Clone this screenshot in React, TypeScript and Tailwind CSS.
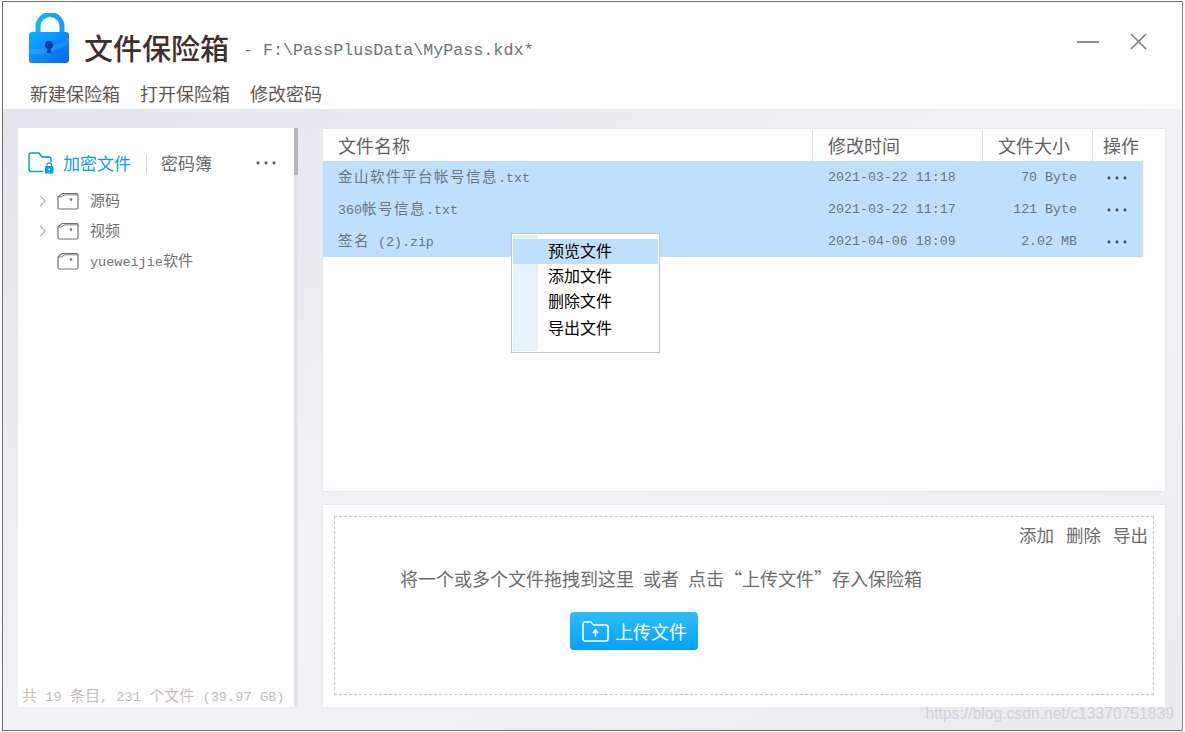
import { ChevronRight } from 'lucide-react';

const cjk = { fontFamily: '"Noto Sans CJK SC", "Liberation Sans", sans-serif' };
const mono = { fontFamily: '"Liberation Mono", "Noto Sans CJK SC", monospace' };

const files = [
  { name: '金山软件平台帐号信息.txt', time: '2021-03-22 11:18', size: '70 Byte' },
  { name: '360帐号信息.txt', time: '2021-03-22 11:17', size: '121 Byte' },
  { name: '签名 (2).zip', time: '2021-04-06 18:09', size: '2.02 MB' },
];

const folders = [
  { name: '源码', arrow: true },
  { name: '视频', arrow: true },
  { name: 'yueweijie软件', arrow: false },
];

const menuItems = [
  { label: '预览文件', rowClass: 'h-[25px] bg-[#bfe0fd]' },
  { label: '添加文件', rowClass: 'h-[25px]' },
  { label: '删除文件', rowClass: 'h-[25px]' },
  { label: '导出文件', rowClass: 'h-[27px] pt-[2px]' },
];

// chinese runs are bigger than the mono latin in the original font
function Mixed({ text, cjkClass }: { text: string; cjkClass: string }) {
  return (
    <>
      {text.split(/([\u4e00-\u9fff]+)/).map((part, i) =>
        i % 2 === 1 ? (
          <span key={i} className={cjkClass} style={cjk}>
            {part}
          </span>
        ) : (
          <span key={i}>{part}</span>
        ),
      )}
    </>
  );
}

function LockLogo() {
  return (
    <svg width="42" height="52" viewBox="0 0 42 52">
      <defs>
        <linearGradient id="lockBody" x1="0" y1="0" x2="1" y2="1">
          <stop offset="0" stopColor="#0cb4ff" />
          <stop offset="1" stopColor="#0a62fb" />
        </linearGradient>
        <linearGradient id="lockRing" x1="0" y1="0" x2="1" y2="0">
          <stop offset="0" stopColor="#12b5fd" />
          <stop offset="1" stopColor="#1c9cf8" />
        </linearGradient>
      </defs>
      <path d="M9 22V13.5a12 12 0 0 1 24 0V22" fill="none" stroke="url(#lockRing)" strokeWidth="5" />
      <rect x="0" y="19" width="40" height="31" rx="3" fill="url(#lockBody)" />
      <path d="M0 36c14 1 30-3 40-11v5c-10 8-26 12-40 11z" fill="#ffffff" opacity="0.08" />
      <circle cx="20" cy="32" r="4" fill="#0a3f98" />
      <path d="M18.4 33h3.2l.4 7h-4z" fill="#0a3f98" />
    </svg>
  );
}

function SafeFolderIcon() {
  return (
    <svg width="26" height="22" viewBox="0 0 26 22" fill="none" stroke="#0a9cf5" strokeWidth="1.5">
      <path d="M15 19.5H3a2 2 0 0 1-2-2V3a2 2 0 0 1 2-2h8l3 4h7a2 2 0 0 1 2 2v3" />
      <path d="M11 1.2l3 3.8h8" strokeWidth="1" />
      <rect x="17" y="14" width="8.5" height="7.5" rx="1" fill="#0a9cf5" stroke="none" />
      <path d="M19 14.5v-1.5a2.2 2.2 0 0 1 4.4 0v1.5" strokeWidth="1.2" />
      <circle cx="21.2" cy="17.5" r="1" fill="#ffffff" stroke="none" />
    </svg>
  );
}

function FolderIcon() {
  return (
    <svg width="22" height="18" viewBox="0 0 22 18" fill="none" stroke="#6f6f6f" strokeWidth="1.2">
      <path d="M1 5V15.5a1.5 1.5 0 0 0 1.5 1.5h17a1.5 1.5 0 0 0 1.5-1.5V3a1.5 1.5 0 0 0-1.5-1.5H5L1 5z" />
      <path d="M1 5h3l4-2.2h13" strokeWidth="0.9" />
      <circle cx="14" cy="7.5" r="1.3" fill="#6f6f6f" stroke="none" />
    </svg>
  );
}

function UploadFolderIcon() {
  return (
    <svg width="27" height="21" viewBox="0 0 27 21" fill="none" stroke="#ffffff" strokeWidth="1.6">
      <path d="M1 3a2 2 0 0 1 2-2h6l2.5 3H24a2 2 0 0 1 2 2v12a2 2 0 0 1-2 2H3a2 2 0 0 1-2-2z" />
      <path d="M13.5 15.5v-5M10.8 12l2.7-2.7 2.7 2.7" strokeWidth="1.7" />
    </svg>
  );
}

function Dots({ color = '#4a4a4a' }: { color?: string }) {
  return (
    <svg width="20" height="4" viewBox="0 0 20 4">
      <circle cx="2" cy="2" r="1.4" fill={color} />
      <circle cx="10" cy="2" r="1.4" fill={color} />
      <circle cx="18" cy="2" r="1.4" fill={color} />
    </svg>
  );
}

export default function App() {
  return (
    <div className="w-[1185px] h-[732px] bg-white overflow-hidden pl-[2px] pt-[1px]" style={cjk}>
      <div className="relative w-[1181px] h-[730px] flex flex-col border-l border-t border-r border-b border-l-[#6e6e6e] border-t-[#6e6e6e] border-r-[#8a8a8a] border-b-[#6e6e6e] bg-white">
        {/* Title bar */}
        <div className="h-[107px] shrink-0 flex flex-col">
          <div className="h-[72px] flex items-start pl-[26px] pr-[35px]">
            <div className="mt-[11px]">
              <LockLogo />
            </div>
            <span className="ml-[13px] mt-[26px] text-[29px] leading-[38px] font-medium text-[#3f2f2d]">文件保险箱</span>
            <span className="ml-[14px] mt-[37px] text-[16.7px] leading-[24px] text-[#6c7478]" style={mono}>
              - F:\PassPlusData\MyPass.kdx*
            </span>
            <div className="ml-auto mt-[31px] flex items-center gap-[31px]">
              <div className="w-[22px] h-[2px] bg-[#8c8c8c]" />
              <svg width="17" height="17" viewBox="0 0 17 17" stroke="#7d7d7d" strokeWidth="1.6">
                <path d="M1 1l15 15M16 1L1 16" />
              </svg>
            </div>
          </div>
          <div className="flex gap-[20px] pl-[27px] mt-[7px] text-[18px] leading-[24px] text-[#5d5553]">
            <span>新建保险箱</span>
            <span>打开保险箱</span>
            <span>修改密码</span>
          </div>
        </div>

        {/* Body */}
        <div className="flex-1 flex gap-[24px] pl-[15px] pr-[16px] pt-[19px] pb-[23px] bg-gradient-to-br from-[#e2e5eb] via-[#f1f2f5] to-[#e9ebef]">
          {/* Left panel */}
          <div className="relative w-[280px] shrink-0 bg-white border-r-[4px] border-r-[#e2e4e9] flex flex-col">
            <div className="absolute right-[-4px] top-0 w-[4px] h-[47px] bg-[#b4b7bd]" />
            <div className="flex items-center h-[24px] mt-[23px] pl-[10px] pr-[18px]">
              <SafeFolderIcon />
              <span className="ml-[9px] text-[17px] leading-[24px] text-[#0a9cf5]">加密文件</span>
              <div className="ml-[15px] w-px h-[19px] bg-[#d8d8d8]" />
              <span className="ml-[14px] text-[17px] leading-[24px] text-[#6a6a6a]">密码簿</span>
              <div className="ml-auto">
                <Dots />
              </div>
            </div>
            <div className="mt-[11px] flex flex-col">
              {folders.map(f => (
                <div key={f.name} className="h-[30px] flex items-center pl-[19px]">
                  <div className="w-[20px] shrink-0">
                    {f.arrow && <ChevronRight size={18} strokeWidth={1.8} className="text-[#b4b7bc] -ml-[3px]" />}
                  </div>
                  <FolderIcon />
                  <span className="ml-[11px] text-[13.5px] text-[#6f6f6f]" style={mono}>
                    <Mixed text={f.name} cjkClass="text-[15px]" />
                  </span>
                </div>
              ))}
            </div>
            <div className="mt-auto pl-[4px] h-[23px] text-[13.7px] leading-[22px] text-[#c3bdb6] whitespace-nowrap" style={mono}>
              <Mixed text="共 19 条目, 231 个文件 (39.97 GB)" cjkClass="text-[15px]" />
            </div>
          </div>

          {/* Right column */}
          <div className="flex-1 flex flex-col gap-[12px] min-w-0">
            {/* File list */}
            <div className="relative h-[364px] shrink-0 bg-white border-t border-l border-r border-b border-[#e6e8ec]">
              <div className="flex h-[32px] pt-[1px] text-[18px] leading-[30px] text-[#5f5f5f]">
                <div className="w-[489px] pl-[15px]">文件名称</div>
                <div className="w-[170px] pl-[15px] border-l border-[#dedede]">修改时间</div>
                <div className="w-[110px] pl-[15px] border-l border-[#dedede]">文件大小</div>
                <div className="pl-[10px] border-l border-[#dedede]">操作</div>
              </div>
              <div className="w-[820px] bg-[#bfe0fd] text-[13.3px] text-[#6f7478]" style={mono}>
                {files.map(f => (
                  <div key={f.time} className="h-[32px] flex items-center pt-[1px]">
                    <div className="w-[489px] pl-[15px] mb-[2px]">
                      <Mixed text={f.name} cjkClass="text-[14.5px] tracking-[1.5px]" />
                    </div>
                    <div className="w-[170px] pl-[16px]">{f.time}</div>
                    <div className="w-[95px] text-right">{f.size}</div>
                    <div className="ml-[30px]">
                      <Dots color="#3f444a" />
                    </div>
                  </div>
                ))}
              </div>

              {/* Context menu */}
              <div className="absolute left-[188px] top-[104px] w-[149px] h-[120px] z-10 bg-white border border-[#bcc6d6] p-px">
                <div className="relative h-full">
                  <div className="absolute left-0 top-0 bottom-0 w-[25px] bg-[#e6f1fb]" />
                  <div className="relative pt-[4px] text-[16px] leading-[22px] text-[#000000]">
                    {menuItems.map(item => (
                      <div key={item.label} className={`pl-[35px] w-[145px] ${item.rowClass}`}>
                        {item.label}
                      </div>
                    ))}
                  </div>
                </div>
              </div>
            </div>

            {/* Upload area */}
            <div className="flex-1 bg-white border-t border-l border-r border-[#e6e8ec] pt-[11px] pl-[11px] pr-[11px] pb-[12px]">
              <div className="h-full border border-dashed border-[#c9c9c9] flex flex-col">
                <div className="flex justify-end gap-[12px] pr-[5px] mt-[6px] text-[17.5px] leading-[24px] text-[#6c6c6c]">
                  <span>添加</span>
                  <span>删除</span>
                  <span>导出</span>
                </div>
                <div className="mt-[19px] pl-[65px] text-[18px] leading-[24px] text-[#6c6c6c] whitespace-nowrap [word-spacing:5px]">
                  将一个或多个文件拖拽到这里 或者 点击“上传文件”存入保险箱
                </div>
                <div className="mt-[22px] ml-[235px] w-[128px] h-[38px] rounded-[4px] bg-gradient-to-b from-[#2bbdfd] to-[#02a1fd] flex items-center pl-[12px] gap-[6px] text-[18px] text-white">
                  <UploadFolderIcon />
                  <span>上传文件</span>
                </div>
              </div>
            </div>
          </div>
        </div>

        {/* Watermark */}
        <div className="absolute right-[8px] bottom-[6px] text-[15.7px] leading-[20px] text-[#cfd2d8]" style={{ fontFamily: '"Liberation Sans", sans-serif' }}>
          https://blog.csdn.net/c13370751839
        </div>
      </div>
    </div>
  );
}
